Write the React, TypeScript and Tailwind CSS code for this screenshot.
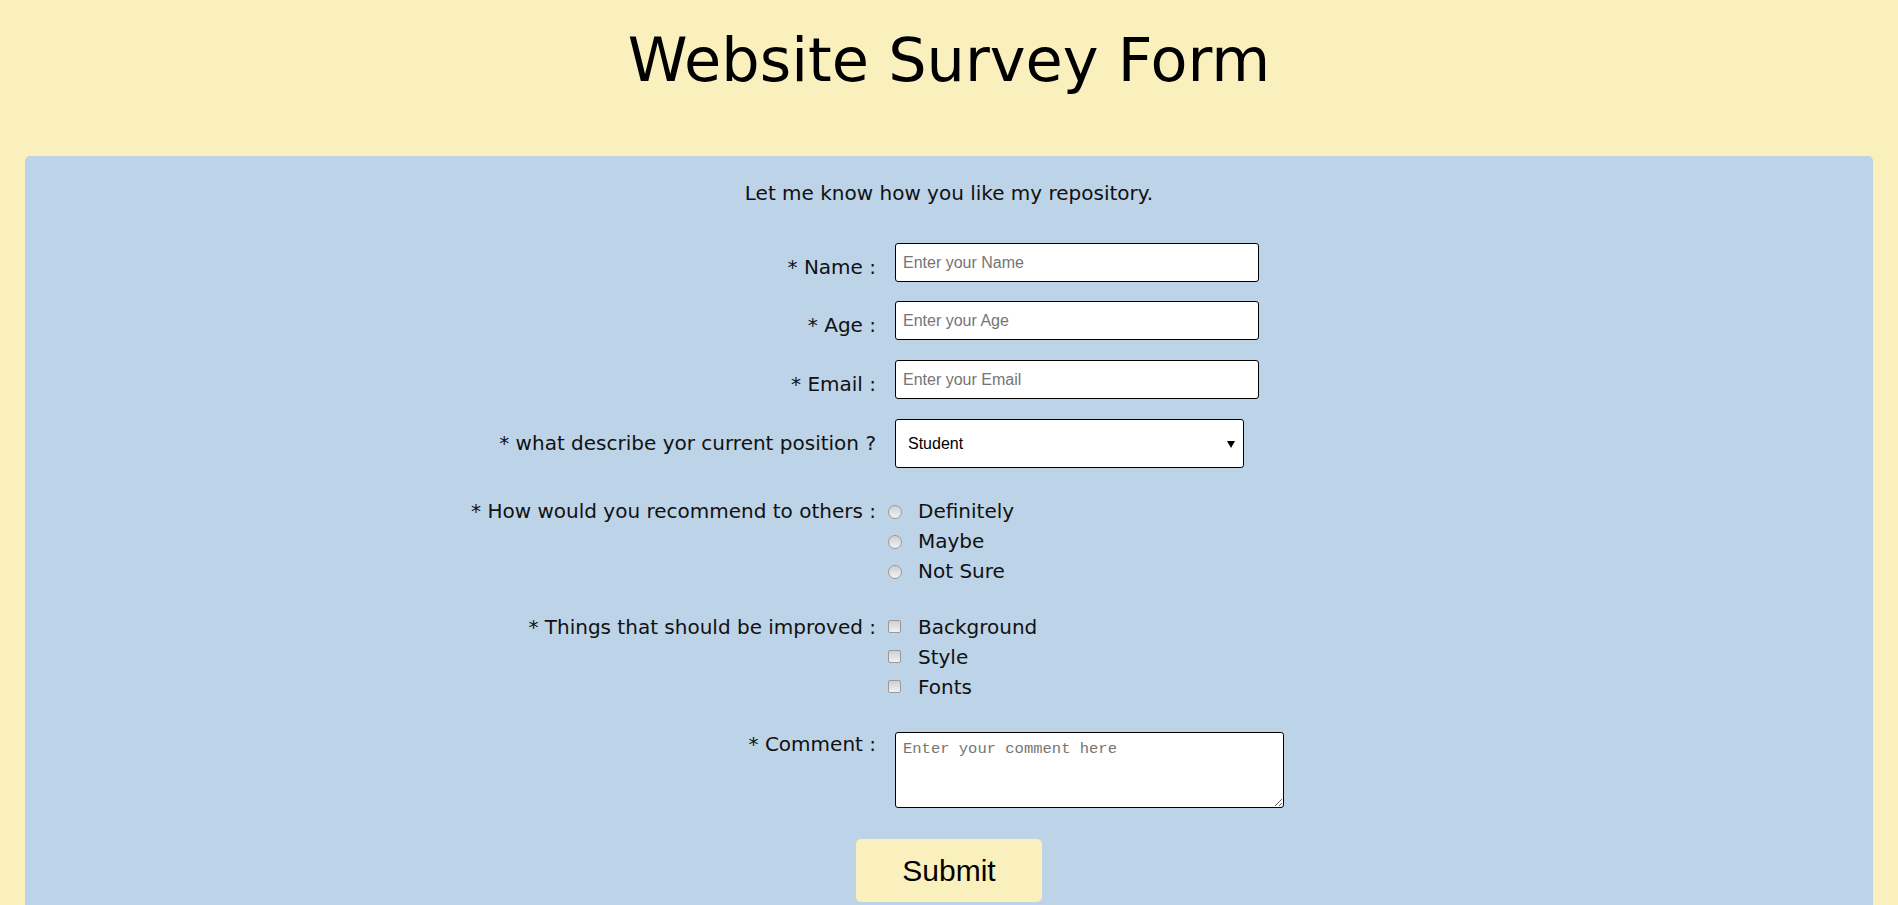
import React from "react";

const labelCls =
  "w-[851px] shrink-0 text-right text-[20px] leading-[30px] text-[#111] pr-0";

function Row({
  label,
  children,
  className = "",
  labelClass = "mt-[9px]",
}: {
  label: string;
  children: React.ReactNode;
  className?: string;
  labelClass?: string;
}) {
  return (
    <div className={"flex items-start gap-[19px] " + className}>
      <div className={labelCls + " " + labelClass}>{label}</div>
      <div className="flex flex-col">{children}</div>
    </div>
  );
}

function TextInput({ placeholder }: { placeholder: string }) {
  return (
    <input
      type="text"
      placeholder={placeholder}
      className="w-[364px] h-[39px] border border-black rounded-[3px] bg-white pl-[7px] text-[16px] text-black placeholder:text-[#757575] outline-none"
      style={{ fontFamily: '"Liberation Sans", Arial, sans-serif' }}
    />
  );
}

function Radio({ label }: { label: string }) {
  return (
    <div className="flex items-center h-[30px] ml-[-7px]">
      <span className="mt-[1px] w-[14px] h-[14px] rounded-full border border-[#999999] bg-gradient-to-b from-[#cfcfcf] to-[#f2f2f2] shrink-0" />
      <span className="ml-[16px] text-[20px] leading-[30px] text-[#111]">{label}</span>
    </div>
  );
}

function Check({ label }: { label: string }) {
  return (
    <div className="flex items-center h-[30px] ml-[-7px]">
      <span className="mt-[-1px] w-[13px] h-[13px] rounded-[2px] border border-[#999999] bg-gradient-to-b from-[#cfcfcf] to-[#f2f2f2] shrink-0" />
      <span className="ml-[17px] text-[20px] leading-[30px] text-[#111]">{label}</span>
    </div>
  );
}

export default function App() {
  return (
    <div
      className="h-[905px] overflow-hidden bg-[#faf0be] pt-[26px]"
      style={{ fontFamily: '"DejaVu Sans", "Noto Sans", sans-serif' }}
    >
      <h1 className="text-center text-[60.5px] leading-[69px] font-normal text-black">
        Website Survey Form
      </h1>
      <div className="mx-[25px] mt-[61px] rounded-[5px] bg-[#bdd3e7] pt-[22px] pb-[40px]">
        <p className="text-center text-[20px] leading-[30px] text-[#111]">
          Let me know how you like my repository.
        </p>

        <Row label="* Name :" className="mt-[35px]">
          <TextInput placeholder="Enter your Name" />
        </Row>
        <Row label="* Age :" className="mt-[19px]">
          <TextInput placeholder="Enter your Age" />
        </Row>
        <Row label="* Email :" className="mt-[20px]">
          <TextInput placeholder="Enter your Email" />
        </Row>
        <Row label="* what describe yor current position ?" className="mt-[20px]">
          <div
            className="relative w-[349px] h-[49px] border border-black rounded-[3px] bg-white flex items-center pl-[12px] text-[16px] text-black"
            style={{ fontFamily: '"Liberation Sans", Arial, sans-serif' }}
          >
            Student
            <svg
              className="absolute right-[8px] top-1/2 -translate-y-1/2"
              width="8"
              height="8"
              viewBox="0 0 8 8"
            >
              <path d="M0 1 L8 1 L4 8 Z" fill="#000" />
            </svg>
          </div>
        </Row>

        <Row label="* How would you recommend to others :" className="mt-[28px]" labelClass="mt-0">
          <Radio label="Definitely" />
          <Radio label="Maybe" />
          <Radio label="Not Sure" />
        </Row>

        <Row label="* Things that should be improved :" className="mt-[26px]" labelClass="mt-0">
          <Check label="Background" />
          <Check label="Style" />
          <Check label="Fonts" />
        </Row>

        <Row
          label="* Comment :"
          className="mt-[30px]"
          labelClass="mt-0 !leading-[24px]"
        >
          <textarea
            placeholder="Enter your comment here"
            className="block w-[389px] h-[76px] border border-black rounded-[3px] bg-white pl-[7px] pt-[8px] text-[15.5px] leading-[17px] text-black placeholder:text-[#757575] outline-none"
            style={{ fontFamily: '"Liberation Mono", "DejaVu Sans Mono", monospace' }}
          />
        </Row>

        <div className="flex justify-center mt-[31px]">
          <button
            type="button"
            className="w-[186px] h-[63px] rounded-[5px] bg-[#faf0be] text-[30px] text-black"
            style={{ fontFamily: '"Liberation Sans", Arial, sans-serif' }}
          >
            Submit
          </button>
        </div>
      </div>
    </div>
  );
}
